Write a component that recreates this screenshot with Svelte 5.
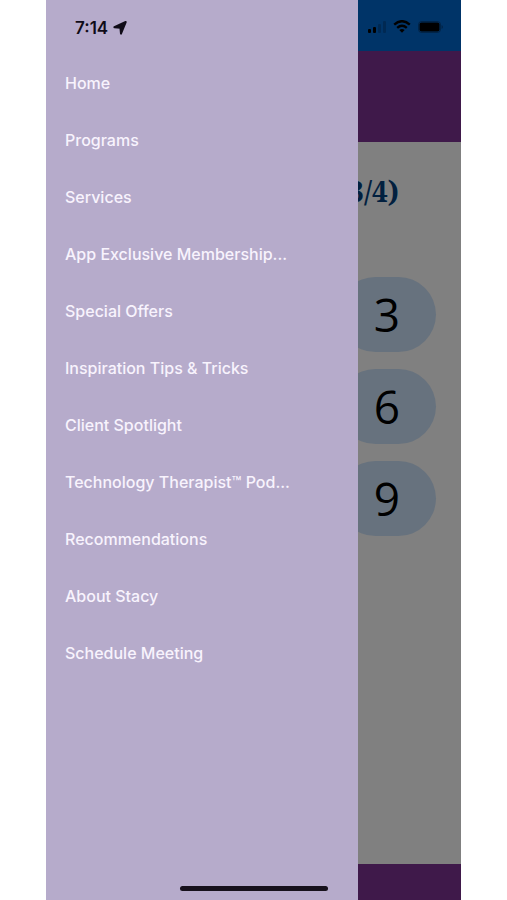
<script>
    const time = '7:14';

    const menu = [
        'Home',
        'Programs',
        'Services',
        'App Exclusive Membership...',
        'Special Offers',
        'Inspiration Tips & Tricks',
        'Client Spotlight',
        'Technology Therapist™ Pod...',
        'Recommendations',
        'About Stacy',
        'Schedule Meeting'
    ];

    const keys = [3, 6, 9];
</script>

<div class="screen">
    <div class="phone">
        <aside class="drawer">
            <div class="clock">
                <span>{time}</span>
                <svg width="14" height="14" viewBox="0 0 14 14" aria-hidden="true">
                    <path d="M12.7 1 L8 12.6 L7.4 6.7 L1.4 6.2 Z" class="arrow" />
                </svg>
            </div>
            <nav>
                <ul>
                    {#each menu as item}
                        <li><a href="#menu">{item}</a></li>
                    {/each}
                </ul>
            </nav>
        </aside>

        <main class="page">
            <div class="status">
                <svg width="18" height="12" viewBox="0 0 18 12" aria-hidden="true">
                    <rect x="0" y="8" width="3" height="4" rx="1" />
                    <rect x="5" y="6" width="3" height="6" rx="1" />
                    <rect x="10" y="3" width="3" height="9" rx="1" opacity="0.2" />
                    <rect x="15" y="0" width="3" height="12" rx="1" opacity="0.2" />
                </svg>
                <svg width="18" height="13" viewBox="0 0 18 13" aria-hidden="true">
                    <path d="M1.2 4.6 Q9 -2.2 16.8 4.6" class="wave" />
                    <path d="M4.2 7.9 Q9 3.8 13.8 7.9" class="wave" />
                    <path d="M6.3 9.9 Q9 7.9 11.7 9.9 L9 12.7 Z" />
                </svg>
                <svg width="25" height="12" viewBox="0 0 25 12" aria-hidden="true">
                    <rect x="0.5" y="0.5" width="22" height="11" rx="3" class="shell" />
                    <rect x="1.5" y="1.5" width="20" height="9" rx="2" />
                    <path d="M23.5 4 Q25 4.6 25 6 Q25 7.4 23.5 8 Z" opacity="0.3" />
                </svg>
            </div>
            <header class="bar"></header>
            <section class="quiz">
                <h1>3/4)</h1>
                <div class="keypad">
                    {#each keys as key}
                        <button type="button">{key}</button>
                    {/each}
                </div>
            </section>
            <footer class="tabs"></footer>
        </main>

        <div class="home-indicator"></div>
    </div>
</div>

<style>
    :global(body) {
        margin: 0;
        background: #fff;
    }

    .screen {
        padding: 0 46px;
    }

    .phone {
        position: relative;
        display: flex;
        min-height: 100vh;
        overflow: hidden;
    }

    .drawer {
        flex: 1;
        min-width: 0;
        background: #b6abcb;
        font-family: Inter, "Liberation Sans", sans-serif;
    }

    .clock {
        display: flex;
        align-items: center;
        gap: 5px;
        height: 55px;
        padding-left: 29px;
        color: #100c18;
        font-size: 17px;
        font-weight: 600;
    }

    .arrow {
        fill: #100c18;
        stroke: #100c18;
        stroke-width: 2;
        stroke-linejoin: round;
    }

    ul {
        margin: 0;
        padding: 0;
        list-style: none;
    }

    a {
        display: block;
        padding: 0 19px;
        color: #f8f3fd;
        font-size: 16px;
        font-weight: 500;
        line-height: 57px;
        text-decoration: none;
        white-space: nowrap;
    }

    .page {
        display: flex;
        flex-direction: column;
        flex: 0 0 103px;
        overflow: hidden;
        background: #808080;
    }

    .status {
        display: flex;
        align-items: center;
        gap: 7px;
        height: 51px;
        padding: 2px 0 0 10px;
        box-sizing: border-box;
        background: #003468;
    }

    .status svg {
        flex: none;
    }

    .wave {
        fill: none;
        stroke: #000;
        stroke-width: 2.4;
    }

    .shell {
        fill: none;
        stroke: #000;
        opacity: 0.3;
    }

    .bar {
        height: 91px;
        background: #3f194a;
    }

    .quiz {
        display: flex;
        flex-direction: column;
        align-items: flex-end;
        flex: 1;
    }

    h1 {
        margin: 29px 62px 66px 0;
        color: #02203f;
        font-family: "Noto Serif", "DejaVu Serif", serif;
        font-size: 28px;
        font-weight: 700;
        line-height: 40px;
    }

    .keypad {
        display: flex;
        flex-direction: column;
        gap: 17px;
        margin-right: 25px;
    }

    button {
        width: 98px;
        height: 75px;
        padding: 0;
        border: 0;
        border-radius: 38px;
        background: #67727e;
        color: #000;
        font-family: "Open Sans", "Noto Sans", sans-serif;
        font-size: 46px;
        line-height: 75px;
    }

    .tabs {
        height: 36px;
        background: #3f194a;
    }

    .home-indicator {
        position: absolute;
        bottom: 9px;
        left: 50%;
        width: 148px;
        height: 5px;
        margin-left: -74px;
        border-radius: 3px;
        background: #17111c;
    }
</style>
